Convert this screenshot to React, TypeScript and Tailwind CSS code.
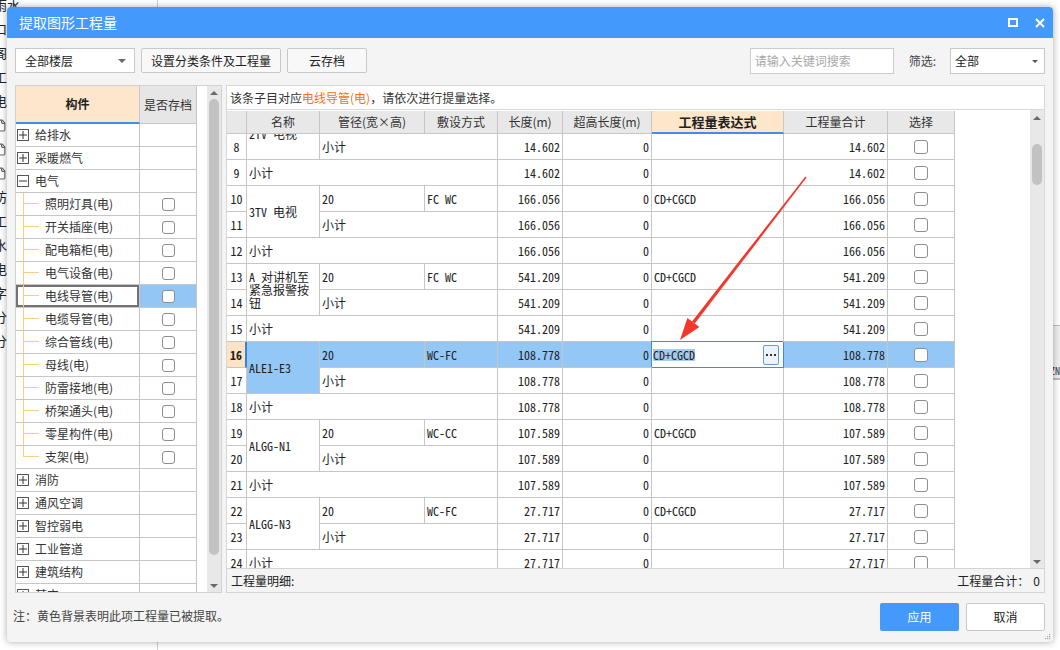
import { File } from 'lucide-react';

const UI = "font-[family-name:'Noto_Sans_CJK_SC',sans-serif]";
const MONO = "font-[family-name:'Noto_Sans_Mono_CJK_SC','DejaVu_Sans_Mono','Noto_Sans_CJK_SC',monospace]";

type TreeRow = {
  label: string;
  kind: 'plus' | 'minus' | 'child';
  last?: boolean;
  selected?: boolean;
};

const tree: TreeRow[] = [
  { label: '给排水', kind: 'plus' },
  { label: '采暖燃气', kind: 'plus' },
  { label: '电气', kind: 'minus' },
  { label: '照明灯具(电)', kind: 'child' },
  { label: '开关插座(电)', kind: 'child' },
  { label: '配电箱柜(电)', kind: 'child' },
  { label: '电气设备(电)', kind: 'child' },
  { label: '电线导管(电)', kind: 'child', selected: true },
  { label: '电缆导管(电)', kind: 'child' },
  { label: '综合管线(电)', kind: 'child' },
  { label: '母线(电)', kind: 'child' },
  { label: '防雷接地(电)', kind: 'child' },
  { label: '桥架通头(电)', kind: 'child' },
  { label: '零星构件(电)', kind: 'child' },
  { label: '支架(电)', kind: 'child', last: true },
  { label: '消防', kind: 'plus' },
  { label: '通风空调', kind: 'plus' },
  { label: '智控弱电', kind: 'plus' },
  { label: '工业管道', kind: 'plus' },
  { label: '建筑结构', kind: 'plus' },
  { label: '其它', kind: 'plus' },
];

type Group = {
  start: number;
  name: string;
  dia: string;
  lay: string;
  len: string;
  selected?: boolean;
  scrolled?: boolean; // first row sits under the header
};

const groups: Group[] = [
  { start: 7, name: '2TV 电视', dia: '20', lay: 'FC WC', len: '14.602', scrolled: true },
  { start: 10, name: '3TV 电视', dia: '20', lay: 'FC WC', len: '166.056' },
  { start: 13, name: 'A 对讲机至紧急报警按钮', dia: '20', lay: 'FC WC', len: '541.209' },
  { start: 16, name: 'ALE1-E3', dia: '20', lay: 'WC-FC', len: '108.778', selected: true },
  { start: 19, name: 'ALGG-N1', dia: '20', lay: 'WC-CC', len: '107.589' },
  { start: 22, name: 'ALGG-N3', dia: '20', lay: 'WC-FC', len: '27.717' },
];

const bgItems = ['雨水', '口', '阁', '工', '电', '', '', '', '防', '工', '水', '电', '字', '分', '分'];

const cell = 'border-r border-b border-[#c6c6c6] flex items-center min-w-0';
const SEL = 'bg-[#93c7f5]';

function Checkbox({ size = 14 }: { size?: number }) {
  return (
    <div
      className={
        size === 14
          ? 'w-[14px] h-[14px] rounded-[3px] border border-[#8e8e8e] bg-white'
          : 'w-[13px] h-[13px] rounded-[3px] border border-[#8e8e8e] bg-white'
      }
    />
  );
}

function ExpandBox({ open }: { open: boolean }) {
  return (
    <div className="ml-[1px] w-[12px] h-[12px] border border-[#555] bg-white flex items-center justify-center shrink-0">
      <svg width="8" height="8" viewBox="0 0 8 8">
        <line x1="0" y1="4" x2="8" y2="4" stroke="#333" strokeWidth="1" />
        {!open && <line x1="4" y1="0" x2="4" y2="8" stroke="#333" strokeWidth="1" />}
      </svg>
    </div>
  );
}

function UpArrow() {
  return <div className="w-0 h-0 border-x-[4px] border-x-transparent border-b-[4px] border-b-[#6a6a6a]" />;
}

function DownArrow() {
  return <div className="w-0 h-0 border-x-[4px] border-x-transparent border-t-[4px] border-t-[#6a6a6a]" />;
}

function Background() {
  return (
    <div className="flex h-full">
      <div className="w-[158px] h-full border-r border-[#cfcfcf] bg-white">
        <div className="mt-[-7px] ml-[-6px] flex flex-col text-[13px] text-[#222]">
          {bgItems.map((t, i) => (
            <div key={i} className="h-[24px] flex items-center">
              {t ? <span>{t}</span> : <File className="w-[13px] h-[13px] text-[#666]" />}
            </div>
          ))}
        </div>
      </div>
      <div className="flex-1 flex flex-col items-end pt-[325px]">
        <div className="w-[24px] h-[55px] bg-[#efefef] border-t border-b-2 border-[#bdbdbd] flex flex-col items-end pt-[4px]">
          <span className="text-[13px] font-bold leading-[16px] text-black">量量</span>
          <div className="w-full h-[2px] bg-[#3d8fe8] mt-[2px]" />
          <span className={`text-[10px] leading-[14px] text-[#333] ${MONO}`}>ZN</span>
        </div>
      </div>
    </div>
  );
}

function LeftPanel() {
  return (
    <div className="w-[207px] h-[508px] border border-[#d2d2d2] bg-white flex shrink-0">
      <div className="w-[181px] h-full overflow-hidden flex flex-col">
        <div className="flex h-[38px] shrink-0">
          <div className="w-[124px] border-r border-[#c6c6c6] border-b-2 border-b-[#3d8fe8] bg-[#fde7cc] flex items-center justify-center text-[12px] font-bold text-[#222]">
            构件
          </div>
          <div className="w-[57px] border-r border-b border-[#c6c6c6] bg-[#e6e6e6] flex items-center justify-center text-[12px] text-[#333]">
            是否存档
          </div>
        </div>
        {tree.map((r) => (
          <div key={r.label} className="flex h-[23px] shrink-0 border-b border-[#c6c6c6]">
            <div
              className={`w-[124px] border-r border-[#c6c6c6] flex items-center text-[12px] text-[#333] ${
                r.selected ? 'shadow-[inset_0_0_0_2px_#737373]' : ''
              }`}
            >
              {r.kind === 'child' ? (
                <div className="ml-[7px] w-[16px] h-full flex flex-col shrink-0">
                  <div className="h-1/2 border-l border-b border-[#ffcb80]" />
                  <div className={r.last ? 'flex-1' : 'flex-1 border-l border-[#ffcb80]'} />
                </div>
              ) : (
                <ExpandBox open={r.kind === 'minus'} />
              )}
              <span className="ml-[6px] whitespace-nowrap">{r.label}</span>
            </div>
            <div
              className={`w-[57px] border-r border-[#c6c6c6] flex items-center justify-center ${
                r.selected ? 'bg-[#93c6f3]' : ''
              }`}
            >
              {r.kind === 'child' && <Checkbox size={13} />}
            </div>
          </div>
        ))}
      </div>
      <div className="w-[10px] h-full bg-white" />
      <div className="w-[14px] h-full bg-[#e8e8e8] flex flex-col items-center">
        <div className="h-[13px] flex items-center justify-center">
          <UpArrow />
        </div>
        <div className="w-[10px] h-[456px] rounded-[5px] bg-[#c2c2c2]" />
        <div className="flex-1" />
        <div className="h-[12px] flex items-center justify-center">
          <DownArrow />
        </div>
      </div>
    </div>
  );
}

function GroupRows({ g }: { g: Group }) {
  const s = g.selected;
  const h = g.scrolled;
  const num = (n: number, bold?: boolean) => (
    <div
      className={`${cell} justify-center ${
        bold ? 'bg-[#fde3c3] font-bold border-r-2 border-r-[#3b82d6]' : ''
      }`}
    >
      {n}
    </div>
  );
  return (
    <>
      {h ? <div className={cell} /> : num(g.start, s)}
      <div className={`${cell} row-span-2 pl-[2px] leading-[13px] ${s ? SEL : ''}`}>
        <span>{g.name}</span>
      </div>
      <div className={`${cell} pl-[2px] ${s ? SEL : ''}`}>{h ? '' : g.dia}</div>
      <div className={`${cell} pl-[2px] ${s ? SEL : ''}`}>{h ? '' : g.lay}</div>
      <div className={`${cell} justify-end pr-[2px] ${s ? SEL : ''}`}>{h ? '' : g.len}</div>
      <div className={`${cell} justify-end pr-[2px] ${s ? SEL : ''}`}>{h ? '' : '0'}</div>
      {s ? (
        <div className={`${cell} relative z-[1] justify-between pl-[1px] pr-[4px] bg-white border-r-[#3d8ce4] border-b-[#3d8ce4] shadow-[-1px_-1px_0_0_#3d8ce4]`}>
          <span className="bg-[#a6c9ee] leading-[12px]">CD+CGCD</span>
          <div className="w-[16px] h-[20px] rounded-[2px] border border-[#5b9be2] bg-[#eef3fb] flex items-center justify-center gap-[2px]">
            <div className="w-[2px] h-[2px] bg-[#333]" />
            <div className="w-[2px] h-[2px] bg-[#333]" />
            <div className="w-[2px] h-[2px] bg-[#333]" />
          </div>
        </div>
      ) : (
        <div className={`${cell} pl-[2px]`}>{h ? '' : 'CD+CGCD'}</div>
      )}
      <div className={`${cell} justify-end pr-[2px] ${s ? SEL : ''}`}>{h ? '' : g.len}</div>
      <div className={`${cell} justify-center ${s ? SEL : ''}`}>{h ? null : <Checkbox />}</div>

      {num(g.start + 1)}
      <div className={`${cell} col-span-2 pl-[2px] ${UI}`}>小计</div>
      <div className={`${cell} justify-end pr-[2px]`}>{g.len}</div>
      <div className={`${cell} justify-end pr-[2px]`}>0</div>
      <div className={cell} />
      <div className={`${cell} justify-end pr-[2px]`}>{g.len}</div>
      <div className={`${cell} justify-center`}>
        <Checkbox />
      </div>

      {num(g.start + 2)}
      <div className={`${cell} col-span-3 pl-[2px] ${UI}`}>小计</div>
      <div className={`${cell} justify-end pr-[2px]`}>{g.len}</div>
      <div className={`${cell} justify-end pr-[2px]`}>0</div>
      <div className={cell} />
      <div className={`${cell} justify-end pr-[2px]`}>{g.len}</div>
      <div className={`${cell} justify-center`}>
        <Checkbox />
      </div>
    </>
  );
}

function RightPanel() {
  const head = 'border-r border-b border-[#c6c6c6] bg-[#e8e8e8] flex items-center justify-center text-[12px] text-[#333] whitespace-nowrap';
  return (
    <div className="ml-[4px] w-[819px] h-[508px] flex flex-col shrink-0">
      <div className="h-[25px] border border-[#d8d8d8] bg-white flex items-center pl-[3px] text-[12px] text-[#333]">
        该条子目对应<span className="text-[#f5711f]">电线导管(电)</span>，请依次进行提量选择。
      </div>
      <div className="h-[458px] border-x border-[#d8d8d8] bg-white flex">
        <div className="w-[803px] h-full flex flex-col">
          <div className="mt-[1px] h-[23px] grid grid-cols-[20px_73px_105px_73px_65px_89px_132px_104px_67px] w-[728px]">
            <div className={head} />
            <div className={head}>名称</div>
            <div className={head}>管径(宽×高)</div>
            <div className={head}>敷设方式</div>
            <div className={head}>长度(m)</div>
            <div className={head}>超高长度(m)</div>
            <div className="border-r border-[#c6c6c6] border-b-2 border-b-[#3d8fe8] bg-[#fde6c9] flex items-center justify-center text-[13px] font-bold text-[#222]">
              工程量表达式
            </div>
            <div className={head}>工程量合计</div>
            <div className={head}>选择</div>
          </div>
          <div className="h-[434px] overflow-hidden">
            <div
              className={`mt-[-26px] w-[728px] grid grid-cols-[20px_73px_105px_73px_65px_89px_132px_104px_67px] auto-rows-[26px] text-[12px] text-[#222] ${MONO}`}
            >
              {groups.map((g) => (
                <GroupRows key={g.start} g={g} />
              ))}
            </div>
          </div>
        </div>
        <div className="w-[14px] h-full bg-[#e8e8e8] flex flex-col items-center">
          <div className="h-[14px] flex items-center justify-center pt-[2px]">
            <UpArrow />
          </div>
          <div className="mt-[20px] w-[10px] h-[41px] rounded-[5px] bg-[#c2c2c2]" />
          <div className="flex-1" />
          <div className="h-[12px] flex items-center justify-center">
            <DownArrow />
          </div>
        </div>
      </div>
      <div className="h-[25px] border border-[#d4d4d4] bg-[#f4f4f4] flex items-center justify-between pl-[4px] pr-[4px] text-[12px] text-[#222]">
        <span>工程量明细:</span>
        <span>
          工程量合计：<span className="ml-[4px]">0</span>
        </span>
      </div>
    </div>
  );
}

export default function App() {
  return (
    <div className={`relative w-[1060px] h-[650px] overflow-hidden bg-white ${UI}`}>
      <Background />

      <div className="absolute left-[7px] top-[7px] w-[1046px] h-[635px] rounded-[4px] bg-[#f4f4f4] shadow-[0_0_7px_rgba(0,0,0,0.35)] flex flex-col overflow-hidden">
        {/* Title */}
        <div className="h-[31px] shrink-0 bg-[#4499fd] flex items-center justify-between pl-[12px] pr-[8px]">
          <span className="text-[14px] text-white">提取图形工程量</span>
          <div className="flex items-center gap-[17px]">
            <div className="w-[10px] h-[9px] border-2 border-white" />
            <svg width="10" height="10" viewBox="0 0 10 10">
              <path d="M1 1L9 9M9 1L1 9" stroke="#fff" strokeWidth="2" />
            </svg>
          </div>
        </div>

        {/* Toolbar */}
        <div className="h-[47px] shrink-0 flex items-start pt-[10px] px-[8px] text-[12px] text-[#222]">
          <div className="w-[120px] h-[25px] border border-[#c8c8c8] bg-white flex items-center justify-between pl-[9px] pr-[8px]">
            <span>全部楼层</span>
            <DownArrow />
          </div>
          <div className="ml-[6px] w-[140px] h-[25px] border border-[#c8c8c8] rounded-[2px] bg-[#f8f8f8] flex items-center justify-center">
            设置分类条件及工程量
          </div>
          <div className="ml-[6px] w-[80px] h-[25px] border border-[#c8c8c8] rounded-[2px] bg-[#f8f8f8] flex items-center justify-center">
            云存档
          </div>
          <div className="flex-1" />
          <div className="w-[144px] h-[26px] border border-[#cccccc] bg-white flex items-center pl-[4px] text-[#a8a8a8]">
            请输入关键词搜索
          </div>
          <span className="ml-[15px] h-[26px] flex items-center text-[#444]">筛选:</span>
          <div className="ml-[14px] w-[95px] h-[26px] border border-[#c8c8c8] bg-white flex items-center justify-between pl-[4px] pr-[6px]">
            <span>全部</span>
            <div className="w-0 h-0 border-x-[3px] border-x-transparent border-t-[3px] border-t-[#555]" />
          </div>
        </div>

        {/* Main */}
        <div className="h-[508px] shrink-0 flex px-[8px]">
          <LeftPanel />
          <RightPanel />
        </div>

        {/* Footer */}
        <div className="flex-1 flex items-start justify-between pl-[6px] pr-[8px] pt-[10px]">
          <span className="mt-[4px] text-[12px] text-[#444]">注：黄色背景表明此项工程量已被提取。</span>
          <div className="flex gap-[7px]">
            <div className="w-[79px] h-[28px] rounded-[2px] bg-[#4499fd] flex items-center justify-center text-[12px] text-white">
              应用
            </div>
            <div className="w-[79px] h-[28px] rounded-[2px] border border-[#c8c8c8] bg-white flex items-center justify-center text-[12px] text-[#222]">
              取消
            </div>
          </div>
        </div>

        <svg className="absolute right-[2px] bottom-[2px]" width="7" height="7" viewBox="0 0 7 7">
          <rect x="5" y="1" width="1.2" height="1.2" fill="#aaa" />
          <rect x="3" y="3" width="1.2" height="1.2" fill="#aaa" />
          <rect x="5" y="3" width="1.2" height="1.2" fill="#aaa" />
          <rect x="1" y="5" width="1.2" height="1.2" fill="#aaa" />
          <rect x="3" y="5" width="1.2" height="1.2" fill="#aaa" />
          <rect x="5" y="5" width="1.2" height="1.2" fill="#aaa" />
        </svg>
      </div>

      {/* Red annotation arrow */}
      <svg className="absolute left-0 top-0 pointer-events-none" width="1060" height="650">
        <polygon points="806.6,177.5 805.4,176.5 692.0,321.4 694.8,323.6" fill="#f2372b" />
        <polygon points="680,340 699.4,327.1 687.4,317.9" fill="#f2372b" />
      </svg>
    </div>
  );
}
